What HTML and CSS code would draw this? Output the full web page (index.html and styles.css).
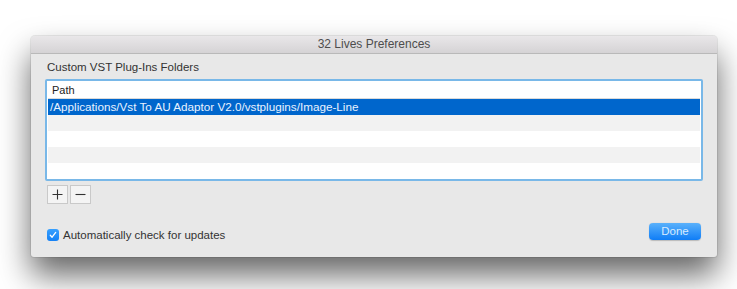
FILE: index.html
```html
<!doctype html>
<html lang="en">
<head>
  <meta charset="UTF-8">
  <meta name="viewport" content="width=device-width, initial-scale=1.0">
  <title>32 Lives Preferences</title>
  <link rel="stylesheet" href="styles.css">
</head>
<body>
  <div class="stage">
    <div class="window">
      <div class="titlebar">32 Lives Preferences</div>

      <div class="content">
        <p class="section-label">Custom VST Plug-Ins Folders</p>

        <div class="table">
          <div class="table-head">Path</div>
          <div class="row selected">/Applications/Vst To AU Adaptor V2.0/vstplugins/Image-Line</div>
          <div class="row alt"></div>
          <div class="row"></div>
          <div class="row alt"></div>
          <div class="row"></div>
        </div>

        <div class="table-buttons">
          <button class="small-btn">
            <svg width="11" height="11" viewBox="0 0 11 11"><path d="M5.5 0.5v10M0.5 5.5h10" stroke="#333" stroke-width="1.1"/></svg>
          </button>
          <button class="small-btn">
            <svg width="11" height="11" viewBox="0 0 11 11"><path d="M0.5 5.5h10" stroke="#333" stroke-width="1.1"/></svg>
          </button>
        </div>

        <div class="footer-row">
          <label class="check">
            <span class="box">
              <svg width="8" height="8" viewBox="0 0 8 8"><path d="M1.3 4.3l1.8 1.9L6.7 1.4" fill="none" stroke="#fff" stroke-width="1.3" stroke-linecap="round" stroke-linejoin="round"/></svg>
            </span>
            Automatically check for updates
          </label>
          <button class="done-btn">Done</button>
        </div>
      </div>
    </div>
  </div>
</body>
</html>
```

FILE: styles.css
```css
* {
    margin: 0;
    padding: 0;
    box-sizing: border-box;
}

html,
body {
    height: 100%;
}

body {
    background-color: #fff;
    font-family: "Liberation Sans", Arial, sans-serif;
    color: #333;
}

.stage {
    height: 100%;
    padding: 36px 0 0 31px;
}

.window {
    width: 686px;
    height: 221px;
    background-color: #e8e8e8;
    border-radius: 4px 4px 3px 3px;
    box-shadow: 0 18px 32px rgba(0, 0, 0, 0.6), 0 0 0 1px rgba(0, 0, 0, 0.08);
    display: flex;
    flex-direction: column;
}

.titlebar {
    height: 18px;
    background: linear-gradient(#e9e7e9, #d5d3d5);
    border-bottom: 1px solid #b9b9b9;
    border-radius: 4px 4px 0 0;
    text-align: center;
    font-size: 12px;
    line-height: 17px;
    color: #4d4d4d;
}

.content {
    padding: 6px 14px 0 14px;
    display: flex;
    flex-direction: column;
}

.section-label {
    font-size: 11.5px;
    line-height: 14px;
    color: #333;
    margin-left: 2px;
}

.table {
    margin-top: 5px;
    height: 102px;
    border: 2px solid #79b8e8;
    border-radius: 2px;
    background-color: #fff;
    padding: 1px;
}

.table-head {
    height: 17px;
    background-color: #fff;
    border-bottom: 1px solid #dadada;
    font-size: 11px;
    line-height: 16px;
    padding-left: 4px;
    color: #222;
}

.row {
    height: 16px;
    font-size: 11.7px;
    line-height: 15px;
    padding-left: 2px;
    background-color: #fff;
}

.row.alt {
    background-color: #f2f2f2;
}

.row.selected {
    background-color: #0066cc;
    color: #e8f2ff;
}

.table-buttons {
    display: flex;
    gap: 2px;
    margin-top: 4px;
    margin-left: 2px;
}

.small-btn {
    width: 21px;
    height: 19px;
    background-color: #f4f4f4;
    border: 1px solid #c9c9c9;
    display: flex;
    align-items: center;
    justify-content: center;
}

.footer-row {
    display: flex;
    justify-content: space-between;
    align-items: flex-start;
    margin-top: 19px;
    padding-right: 2px;
}

.check {
    display: flex;
    align-items: center;
    gap: 4px;
    font-size: 11.5px;
    color: #333;
    margin-top: 6px;
    margin-left: 2px;
}

.box {
    width: 12px;
    height: 12px;
    border-radius: 3px;
    background: linear-gradient(#37a0ff, #1581f5);
    display: flex;
    align-items: center;
    justify-content: center;
}

.done-btn {
    width: 52px;
    height: 17px;
    border: none;
    border-radius: 4px;
    background: linear-gradient(#5ab1fb, #0f7df6);
    color: #d6ebff;
    font-family: "Liberation Sans", Arial, sans-serif;
    font-size: 11.5px;
    line-height: 17px;
    box-shadow: 0 0.5px 1px rgba(0, 0, 0, 0.2);
}
```
